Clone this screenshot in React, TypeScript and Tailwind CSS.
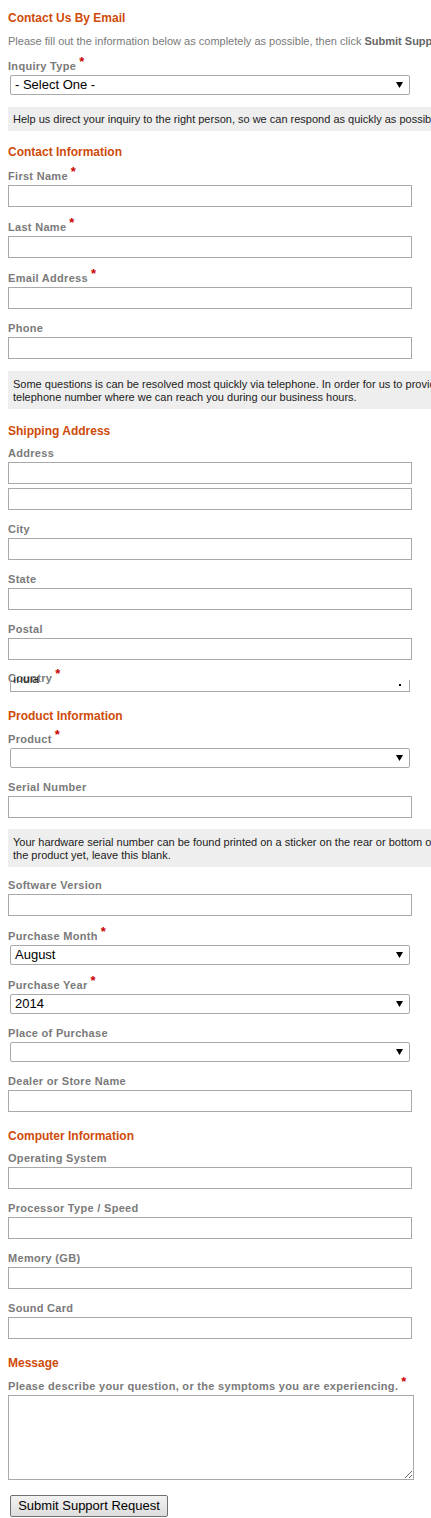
import React from "react";

const Req = () => (
  <span className="relative -top-[4px] ml-[3px] inline-block text-[13px] leading-none font-bold tracking-normal text-[#cc0000]">*</span>
);

const Heading = ({ children, cls }: { children: React.ReactNode; cls: string }) => (
  <div className={`${cls} text-[12px] font-bold leading-[16px] text-[#cf4b0a]`}>{children}</div>
);

const Label = ({ children, cls, req }: { children: React.ReactNode; cls: string; req?: boolean }) => (
  <div className={`${cls} whitespace-nowrap text-[11px] font-bold leading-[14px] tracking-[0.3px] text-[#7a7a7a]`}>
    {children}
    {req && <Req />}
  </div>
);

const Input = ({ cls = "mt-[2px]" }: { cls?: string }) => (
  <input type="text" className={`${cls} block h-[22px] w-[404px] border border-[#a9a9a9] bg-white px-[2px] text-[13px] outline-none`} />
);

const Arrow = () => (
  <svg width="7" height="6" viewBox="0 0 7 6" className="block">
    <polygon points="0,0 7,0 3.5,6" fill="#000" />
  </svg>
);

const Select = ({ value }: { value?: string }) => (
  <div className="mt-[2px] ml-[2px] flex h-[20px] w-[400px] items-center justify-between rounded-[2px] border border-[#a9a9a9] bg-white pl-[4px] pr-[6px] text-[13px] leading-[16px] text-black">
    <span>{value ?? ""}</span>
    <Arrow />
  </div>
);

const Box = ({ cls, children }: { cls: string; children: React.ReactNode }) => (
  <div className={`${cls} w-[640px] whitespace-nowrap bg-[#eeeeee] px-[5px] text-[11px] text-[#222]`}>{children}</div>
);

export default function App() {
  return (
    <div className="w-[431px] overflow-hidden bg-white" style={{ fontFamily: '"Liberation Sans", Arial, sans-serif' }}>
      <div className="px-[8px] pt-[10px] pb-[1px]">
        <Heading cls="">Contact Us By Email</Heading>
        <div className="mt-[8px] whitespace-nowrap text-[11px] leading-[14px] text-[#7a7a7a]">
          Please fill out the information below as completely as possible, then click{" "}
          <span className="font-bold text-[#666]">Submit Support Request</span> to send your request to our support team.
        </div>

        <Label cls="mt-[11px]" req>Inquiry Type</Label>
        <Select value="- Select One -" />

        <Box cls="mt-[12px] py-[5px] leading-[14px]">
          Help us direct your inquiry to the right person, so we can respond as quickly as possible with the best answer.
        </Box>

        <Heading cls="mt-[13px]">Contact Information</Heading>
        <Label cls="mt-[9px]" req>First Name</Label>
        <Input />
        <Label cls="mt-[13px]" req>Last Name</Label>
        <Input />
        <Label cls="mt-[13px]" req>Email Address</Label>
        <Input />
        <Label cls="mt-[12px]">Phone</Label>
        <Input />

        <Box cls="mt-[12px] pt-[7px] pb-[5px] leading-[13px]">
          Some questions is can be resolved most quickly via telephone. In order for us to provide you with the best support, please provide a
          <br />
          telephone number where we can reach you during our business hours.
        </Box>

        <Heading cls="mt-[14px]">Shipping Address</Heading>
        <Label cls="mt-[7px]">Address</Label>
        <Input />
        <Input cls="mt-[4px]" />
        <Label cls="mt-[12px]">City</Label>
        <Input />
        <Label cls="mt-[12px]">State</Label>
        <Input />
        <Label cls="mt-[12px]">Postal</Label>
        <Input />

        <Label cls="mt-[11px]" req>Country</Label>
        <div className="relative -mt-[5px] ml-[2px] h-[12px] w-[400px] border-x border-b border-[#a9a9a9]">
          <div className="absolute left-[2px] -top-[3px] h-[8px] overflow-hidden">
            <div className="-mt-[5px] text-[12px] leading-[14px] text-[#222]">India</div>
          </div>
          <div className="absolute right-[8px] top-[4px] h-[2px] w-[2px] bg-black" />
        </div>

        <Heading cls="mt-[16px]">Product Information</Heading>
        <Label cls="mt-[8px]" req>Product</Label>
        <Select />
        <Label cls="mt-[12px]">Serial Number</Label>
        <Input />

        <Box cls="mt-[11px] pt-[7px] pb-[5px] leading-[13px]">
          Your hardware serial number can be found printed on a sticker on the rear or bottom of the product. If you have not purchased
          <br />
          the product yet, leave this blank.
        </Box>

        <Label cls="mt-[11px]">Software Version</Label>
        <Input />
        <Label cls="mt-[13px]" req>Purchase Month</Label>
        <Select value="August" />
        <Label cls="mt-[13px]" req>Purchase Year</Label>
        <Select value="2014" />
        <Label cls="mt-[12px]">Place of Purchase</Label>
        <Select />
        <Label cls="mt-[12px]">Dealer or Store Name</Label>
        <Input />

        <Heading cls="mt-[16px]">Computer Information</Heading>
        <Label cls="mt-[7px]">Operating System</Label>
        <Input />
        <Label cls="mt-[12px]">Processor Type / Speed</Label>
        <Input />
        <Label cls="mt-[12px]">Memory (GB)</Label>
        <Input />
        <Label cls="mt-[12px]">Sound Card</Label>
        <Input />

        <Heading cls="mt-[16px]">Message</Heading>
        <Label cls="mt-[8px]" req>Please describe your question, or the symptoms you are experiencing.</Label>
        <textarea className="mt-[2px] block h-[85px] w-[406px] border border-[#a9a9a9] bg-white text-[13px] outline-none" />

        <button className="mt-[15px] ml-[2px] block h-[22px] w-[158px] rounded-[2px] border border-[#707070] bg-gradient-to-b from-[#f2f2f2] to-[#dddddd] text-[13px] leading-[20px] text-black">
          Submit Support Request
        </button>
      </div>
    </div>
  );
}
